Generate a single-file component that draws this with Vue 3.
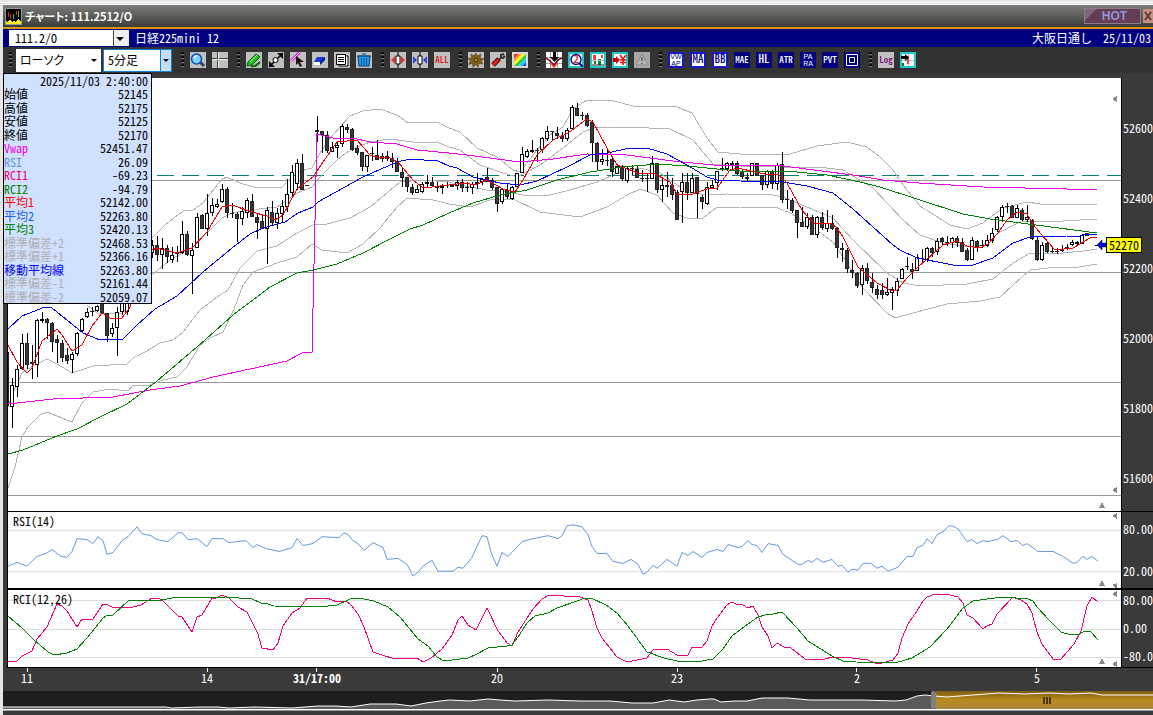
<template>
  <div class="window">
    <header class="title-bar">
      <svg class="app-icon" viewBox="0 0 17 17" shape-rendering="crispEdges">
        <rect width="17" height="17" fill="#999" />
        <rect x="1" y="1" width="15" height="15" fill="#000" />
        <path d="M3.5 4v5M5.5 6v5M11.5 3v4" stroke="#f02020" />
        <path d="M8.5 6v5M13.5 3v6" stroke="#20d040" />
        <path d="M1 16v-3l2 1 2-3 2 3 2-1 2 1 2-3 3 2v3z" fill="#ffee20" />
      </svg>
      <h1>チャート: 111.2512/O</h1>
      <button class="hot" type="button">HOT</button>
      <button class="close" type="button" aria-label="閉じる">
        <svg viewBox="0 0 10 14"><path d="M2 3l6 8M8 3l-6 8" stroke="#5c3c34" stroke-width="2" /></svg>
      </button>
    </header>

    <div class="symbol-bar">
      <div class="combo code">
        <select aria-label="銘柄コード"><option>111.2/O</option></select>
      </div>
      <span class="symbol-name">日経225mini 12</span>
      <span class="session">大阪日通し</span>
      <span>25/11/03</span>
    </div>

    <nav class="toolbar">
      <i class="grip"></i>
      <div class="combo kind">
        <select aria-label="チャート種類"><option>ローソク</option></select>
      </div>
      <div class="combo span">
        <select aria-label="足種"><option>5分足</option></select>
      </div>
      <template v-for="(group, g) in toolGroups" :key="g">
        <i class="grip"></i>
        <button v-for="tool in group" :key="tool.name" class="tool" type="button" :aria-label="tool.name">
          <svg viewBox="0 0 16 16">
            <rect width="16" height="16" :fill="tool.bg || '#c0c0c0'" />
            <rect v-if="tool.frame" x="1" y="1" width="14" height="14" fill="#fff" :stroke="tool.frame" stroke-width="2" />
            <path
              v-for="(s, i) in tool.shapes || []"
              :key="i"
              :d="s.d"
              :fill="s.fill || 'none'"
              :stroke="s.stroke || 'none'"
              :stroke-width="s.w || 1"
            />
            <text
              v-for="(t, i) in tool.text || []"
              :key="t"
              x="8"
              :y="tool.text.length > 1 ? 7 + i * 7 : 11"
              text-anchor="middle"
              :fill="tool.color"
              :class="tool.size || 'small'"
            >{{ t }}</text>
          </svg>
        </button>
      </template>
    </nav>

    <main class="chart">
      <section class="panel price">
        <svg class="plot" viewBox="8 78 1113 433" preserveAspectRatio="none" shape-rendering="crispEdges">
          <path d="M8 180.500H1121M8 272.500H1121M8 382.500H1121M8 436.500H1121M8 495.500H1121" stroke="#999" />
          <path d="M7 175.500H1121" stroke="#008078" stroke-dasharray="17 8" />
          <polyline v-for="(p, i) in bands" :key="i" :points="p" class="line" stroke="#b4b4b4" />
          <g v-for="c in candles" :key="c[0]">
            <rect :x="c[0]" :y="c[1]" width="1" :height="Math.max(c[4] - c[1], 1)" fill="#000" />
            <rect
              :x="c[0] - 1.5"
              :y="c[2] + 0.5"
              width="3"
              :height="Math.max(c[3] - c[2] - 1, 0.1)"
              :fill="c[5] ? '#383838' : '#fff'"
              :stroke="c[5] ? '#222' : '#000'"
            />
          </g>
          <polyline :points="vwap" class="line" stroke="#f000e8" />
          <polyline :points="maLong" class="line" stroke="#008000" />
          <polyline :points="maMid" class="line" stroke="#0000f0" />
          <polyline :points="maShort" class="line" stroke="#f00000" />
          <path d="M1095 245.500H1099" stroke="#000" />
          <path d="M1117 96v6l-5-3zM1117 487v6l-5-3zM1099 508l3-6 3 6z" fill="#888" />
        </svg>
        <div class="axis">
          <span v-for="v in prices" :key="v">{{ v }}</span>
        </div>
        <div class="last-price">
          <svg viewBox="0 0 9 10"><path d="M0 5l5-5v3h4v4H5v3z" fill="#0000e0" stroke="#000" stroke-width="0.500" /></svg>
          <b>52270</b>
        </div>
      </section>

      <section class="panel rsi">
        <svg class="plot" viewBox="8 512 1113 77" preserveAspectRatio="none" shape-rendering="crispEdges">
          <path d="M8 530.500H1121M8 572.500H1121" stroke="#dcdcdc" />
          <polyline :points="rsi" class="line" stroke="#6495e0" />
          <path d="M1117 513v6l-5-3zM1117 584v5h-1l-4-3zM1099 587l3-6 3 6z" fill="#888" />
        </svg>
        <h2>RSI(14)</h2>
        <div class="axis">
          <span>80.00</span>
          <span>20.00</span>
        </div>
      </section>

      <section class="panel rci">
        <svg class="plot" viewBox="8 591 1113 77" preserveAspectRatio="none" shape-rendering="crispEdges">
          <path d="M8 601.500H1121M8 630.500H1121M8 658.500H1121" stroke="#dcdcdc" />
          <polyline :points="rciFast" class="line" stroke="#f0007c" />
          <polyline :points="rciSlow" class="line" stroke="#008000" />
          <path d="M1117 592v6l-5-3zM1117 662v6l-5-3zM1099 665l3-6 3 6z" fill="#888" />
        </svg>
        <h2>RCI(12,26)</h2>
        <div class="axis">
          <span>80.00</span>
          <span>0.00</span>
          <span>-80.0</span>
        </div>
      </section>

      <svg class="time-axis">
        <g v-for="t in times" :key="t.label">
          <line :x1="t.x" :x2="t.x" y1="0" y2="4" stroke="#fff" shape-rendering="crispEdges" />
          <text :x="t.x" y="15" text-anchor="middle" fill="#fff" :class="{ strong: t.strong }">{{ t.label }}</text>
        </g>
      </svg>
    </main>

    <div class="navigator">
      <svg viewBox="3 691 1150 18" preserveAspectRatio="none">
        <defs>
          <linearGradient id="gold" x1="0" y1="0" x2="0" y2="1">
            <stop offset="0" stop-color="#7c5a10" />
            <stop offset="0.500" stop-color="#ba8c1e" />
            <stop offset="1" stop-color="#a8853a" />
          </linearGradient>
        </defs>
        <rect x="3" y="691" width="1150" height="18" fill="#1e1e1e" />
        <polygon :points="`3,709 ${overview} 1153,709`" fill="#5a5a5a" />
        <rect x="936" y="691" width="217" height="18" fill="url(#gold)" />
        <polyline :points="overview" fill="none" stroke="#fff" />
        <rect x="931" y="691" width="5" height="18" rx="2" fill="#808080" />
        <path d="M1044 697v7M1047 697v7M1050 697v7" stroke="#503808" stroke-width="2" />
      </svg>
    </div>
    <footer class="status"></footer>

    <table class="data-box">
      <thead>
        <tr><td colspan="2">2025/11/03 2:40:00</td></tr>
      </thead>
      <tbody>
        <tr v-for="row in readings" :key="row.label">
          <th scope="row" :class="row.tone">{{ row.label }}</th>
          <td>{{ row.value }}</td>
        </tr>
      </tbody>
    </table>
  </div>
</template>

<script setup>
const prices = [52600, 52400, 52200, 52000, 51800, 51600];

// tick positions as a share of the window width, right of the 3px edge
const times = [
  { label: '11', at: 24 },
  { label: '14', at: 204 },
  { label: '31/17:00', at: 314, strong: true },
  { label: '20', at: 494 },
  { label: '23', at: 674 },
  { label: '2', at: 854 },
  { label: '5', at: 1034 }
].map(t => ({ ...t, x: `${(t.at / 1150 * 100).toFixed(2)}%` }));

const readings = [
  { label: '始値', value: '52145' },
  { label: '高値', value: '52175' },
  { label: '安値', value: '52125' },
  { label: '終値', value: '52170' },
  { label: 'Vwap', value: '52451.47', tone: 'magenta' },
  { label: 'RSI', value: '26.09', tone: 'sky' },
  { label: 'RCI1', value: '-69.23', tone: 'pink' },
  { label: 'RCI2', value: '-94.79', tone: 'green' },
  { label: '平均1', value: '52142.00', tone: 'red' },
  { label: '平均2', value: '52263.80', tone: 'azure' },
  { label: '平均3', value: '52420.13', tone: 'green' },
  { label: '標準偏差+2', value: '52468.53', tone: 'gray' },
  { label: '標準偏差+1', value: '52366.16', tone: 'gray' },
  { label: '移動平均線', value: '52263.80', tone: 'blue' },
  { label: '標準偏差-1', value: '52161.44', tone: 'gray' },
  { label: '標準偏差-2', value: '52059.07', tone: 'gray' }
];

const navy = '#000080';
const toolGroups = [
  [
    { name: '拡大', shapes: [
      { d: 'M10 10l4 4', stroke: '#3a3a60', w: 3 },
      { d: 'M11.500 7a5 5 0 1 1-10 0a5 5 0 1 1 10 0z', fill: '#7cd0ff', stroke: '#1050c0', w: 1.5 },
      { d: 'M4 6a3 3 0 0 1 3-2', stroke: '#fff', w: 1.5 }
    ] },
    { name: '十字線', shapes: [
      { d: 'M5.500 0v16M0 6.500h16', stroke: '#305030' },
      { d: 'M6.500 0v16M0 7.500h16', stroke: '#e8f0e8' }
    ] }
  ],
  [
    { name: 'ペン', shapes: [
      { d: 'M2 10l8-8 4 3-8 8-5 1z', fill: '#20c020', stroke: '#106010' },
      { d: 'M4 10l7-7', stroke: '#a0ff90' },
      { d: 'M5 14c4 1 6-1 9-4', stroke: '#106010', w: 2 }
    ] },
    { name: '線分', shapes: [
      { d: 'M3 13L13 3', stroke: '#000', w: 1.5 },
      { d: 'M9 1h6v6zM1 9v6h6z', fill: '#000' },
      { d: 'M10 8a2.500 2.500 0 1 1-5 0a2.500 2.500 0 1 1 5 0z', fill: '#fff', stroke: '#000' }
    ] },
    { name: '選択', shapes: [
      { d: 'M1 9L10 0', stroke: '#f020e0', w: 3 },
      { d: 'M1 9L10 0', stroke: '#fff' },
      { d: 'M6 4v9l2-2 2 4 2-1-2-4h4z', fill: '#201010' }
    ] },
    { name: '消しゴム', shapes: [
      { d: 'M2 10l3-5h8l-2 5z', fill: '#1838d8' },
      { d: 'M2 10h6v3H2z', fill: '#fff' },
      { d: 'M8 10l5-5v3l-5 5z', fill: '#001890' }
    ] },
    { name: 'コピー', shapes: [
      { d: 'M5 4h9v10H5z', fill: '#fff', stroke: '#000' },
      { d: 'M2.500 2.500h9v10h-9z', fill: '#fff', stroke: '#000' },
      { d: 'M4 5.500h6M4 7.500h6M4 9.500h6', stroke: '#000' }
    ] },
    { name: '削除', shapes: [
      { d: 'M2 4h12l-1 10H3z', fill: '#20a0f0', stroke: '#083868' },
      { d: 'M1 4h14M6 2h4M5.500 6v7M10.500 6v7M8 6v7', stroke: '#084888' }
    ] }
  ],
  [
    { name: '間隔を広げる', shapes: [
      { d: 'M1 8l4-4v8zM15 8l-4-4v8z', fill: '#f03030' },
      { d: 'M8 0v16', stroke: '#000' },
      { d: 'M6 4h4v8H6z', fill: '#fff', stroke: '#000' }
    ] },
    { name: '間隔を狭める', shapes: [
      { d: 'M5 8L1 4v8zM11 8l4-4v8z', fill: '#3040f0' },
      { d: 'M8 0v16', stroke: '#000' },
      { d: 'M6 4h4v8H6z', fill: '#fff', stroke: '#000' }
    ] },
    { name: '全体', text: ['ALL'], color: '#e01010' }
  ],
  [
    { name: '設定', shapes: [
      { d: 'M8 1l1.500 3 3.500-2-1 4 4 1-3 2 2 3-4-.5-1 4-2-3-3 3-.5-4-4 1 2-4-3-2 4-.5-.5-4 3 2z', fill: '#806018', stroke: '#403010', w: 0.5 },
      { d: 'M10 8a2 2 0 1 1-4 0a2 2 0 1 1 4 0z', fill: '#b08828', stroke: '#403010' }
    ] },
    { name: '工具', shapes: [
      { d: 'M3 13l6-6', stroke: '#500808', w: 5 },
      { d: 'M3 13l6-6', stroke: '#e02020', w: 3 },
      { d: 'M8 8l3-2M14 2l-3 1 0 2 2 1 2-2', stroke: '#303030', w: 2 }
    ] },
    { name: '配色', bg: '#fff', shapes: [
      { d: 'M0 0h9L0 9z', fill: '#f03030' },
      { d: 'M9 0h3L0 12V9z', fill: '#ff9820' },
      { d: 'M12 0h4L0 16v-4z', fill: '#fff020' },
      { d: 'M16 0v4L4 16H0z', fill: '#20d040' },
      { d: 'M16 4v4l-8 8H4z', fill: '#20d0f0' },
      { d: 'M16 8v4l-4 4H8z', fill: '#3048f0' },
      { d: 'M16 12v4h-4z', fill: '#c020e0' },
      { d: 'M1 1h14v14H1z', stroke: '#d8d8d8', w: 2 }
    ] }
  ],
  [
    { name: '売買サイン', bg: '#fff', shapes: [
      { d: 'M0 5.500h16M0 11.500h16M4.500 0v16M11.500 0v16', stroke: '#a0a0a0' },
      { d: 'M0 6l4 3 4 4 4-5 4-2', stroke: '#700010', w: 1.5 },
      { d: 'M7 0h3v5h3L8.500 10 4 5h3z', fill: '#000' },
      { d: 'M5 11l3 4 3-4', stroke: '#f02020', w: 1.5 }
    ] },
    { name: '銘柄検索', frame: '#20c8c8', text: ['2'], color: '#e01010', size: 'medium', shapes: [
      { d: 'M11 11l4 4', stroke: '#000080', w: 2 },
      { d: 'M13 7.500a5 5 0 1 1-10 0a5 5 0 1 1 10 0z', fill: '#fff', stroke: '#101090', w: 1.5 }
    ] },
    { name: '比較', frame: '#20c8c8', shapes: [
      { d: 'M3 3h3v5H3zM11 3h2v3h-2z', fill: '#f04040' },
      { d: 'M4 9h2v3H4zM8 7h3v6H8z', fill: '#108030' },
      { d: 'M2 8.500h12', stroke: '#b0d0d0' },
      { d: 'M2 13h12', stroke: '#202020' }
    ] },
    { name: '注文', frame: '#20c8c8', shapes: [
      { d: 'M1 6h3V4l4 4-4 4v-2H1z', fill: '#d00000' },
      { d: 'M8 3l3 4 3-4M11 7v6M8 8h6M8 10.500h6', stroke: '#e01010', w: 1.5 }
    ] },
    { name: 'アラート', bg: '#a8a8a8', shapes: [
      { d: 'M8 2l6 11H2z', fill: '#b8b8b8', stroke: '#888' },
      { d: 'M8 5v4M8 10.500v1.500', stroke: '#606060', w: 1.5 }
    ] }
  ],
  [
    { name: 'VWAP', frame: '#1818c8', text: ['VW', 'AP'], color: navy, size: 'tiny' },
    { name: '移動平均', frame: '#1818c8', text: ['MA'], color: navy, size: 'medium' },
    { name: 'ボリンジャーバンド', frame: '#1818c8', text: ['BB'], color: navy, size: 'medium' },
    { name: 'エンベロープ', bg: navy, text: ['MAE'], color: '#fff' },
    { name: 'ハイロー', bg: navy, text: ['HL'], color: '#fff', size: 'medium' },
    { name: 'ATR', bg: navy, text: ['ATR'], color: '#fff' },
    { name: 'パラボリック', bg: navy, text: ['PA', 'RA'], color: '#fff', size: 'tiny' },
    { name: 'ピボット', bg: navy, text: ['PVT'], color: '#fff' },
    { name: '四本値', bg: navy, shapes: [{ d: 'M2.500 2.500h11v11h-11zM5.500 5.500h5v5h-5z', stroke: '#fff' }] }
  ],
  [
    { name: '対数', text: ['Log'], color: '#800080' },
    { name: '画面切替', frame: '#20c8c8', shapes: [
      { d: 'M2 8.500h12M8.500 2v12', stroke: '#c0c0c0' },
      { d: 'M7 4h2v8H7z', fill: '#f04040' },
      { d: 'M1 4h4V2l4 3.500L5 9V7H1z', fill: '#000' },
      { d: 'M2 11h2v3H2z', fill: '#108030' }
    ] }
  ]
];

// x, high, body top, body bottom, low, falling
const candles = [
  [7, 352, 352, 406, 406, 1], [12, 378, 385, 407, 428, 0], [17, 365, 369, 387, 397, 0], [22, 334, 343, 369, 370, 0],
  [27, 333, 343, 365, 369, 1], [32, 345, 362, 364, 379, 1], [37, 319, 320, 365, 377, 0], [42, 312, 319, 321, 323, 0],
  [47, 318, 319, 323, 339, 1], [52, 322, 323, 342, 352, 1], [57, 335, 339, 343, 363, 1], [62, 340, 343, 358, 362, 1],
  [67, 348, 355, 361, 364, 1], [72, 352, 354, 360, 373, 0], [77, 332, 333, 354, 356, 0], [82, 318, 319, 331, 333, 0],
  [87, 308, 312, 317, 318, 0], [92, 307, 311, 312, 316, 1], [97, 305, 306, 311, 312, 0], [102, 303, 303, 313, 313, 1],
  [107, 313, 313, 336, 342, 1], [112, 323, 328, 334, 337, 0], [117, 307, 312, 328, 356, 0], [122, 303, 303, 312, 315, 0],
  [127, 303, 303, 312, 315, 0], [152, 240, 245, 253, 258, 0], [157, 236, 245, 255, 261, 1], [162, 238, 248, 255, 269, 0],
  [167, 245, 248, 257, 263, 1], [172, 247, 255, 260, 263, 0], [177, 246, 253, 254, 262, 1], [182, 221, 234, 253, 254, 0],
  [187, 231, 234, 255, 256, 1], [192, 243, 250, 256, 294, 0], [197, 213, 217, 248, 248, 0], [202, 214, 215, 229, 229, 1],
  [207, 194, 213, 229, 236, 0], [212, 198, 205, 213, 216, 0], [217, 199, 204, 207, 208, 0], [222, 184, 189, 202, 203, 0],
  [227, 187, 189, 213, 218, 1], [232, 203, 213, 214, 218, 1], [237, 212, 214, 219, 242, 1], [242, 207, 211, 219, 225, 0],
  [247, 198, 200, 213, 218, 0], [252, 194, 201, 217, 217, 1], [257, 213, 217, 223, 239, 1], [262, 215, 221, 229, 229, 1],
  [267, 207, 210, 229, 264, 0], [272, 201, 212, 223, 226, 1], [277, 208, 213, 223, 229, 0], [282, 200, 206, 214, 223, 0],
  [287, 179, 194, 207, 212, 0], [292, 165, 172, 193, 197, 0], [297, 159, 163, 184, 190, 0], [302, 154, 163, 190, 190, 1],
  [307, 185, 185, 186, 186, 1], [317, 116, 130, 132, 142, 1], [322, 131, 131, 135, 153, 1], [327, 131, 135, 151, 153, 1],
  [332, 142, 147, 152, 152, 0], [337, 142, 145, 148, 158, 0], [342, 124, 126, 144, 147, 0], [347, 124, 127, 130, 133, 1],
  [352, 128, 129, 150, 151, 1], [357, 145, 148, 153, 155, 1], [362, 152, 152, 167, 171, 1], [367, 155, 155, 167, 172, 0],
  [372, 147, 153, 154, 161, 1], [377, 140, 155, 160, 160, 1], [382, 153, 156, 159, 162, 1], [387, 151, 156, 159, 161, 1],
  [392, 153, 158, 162, 168, 1], [397, 158, 161, 172, 172, 1], [402, 168, 172, 178, 187, 1], [407, 177, 177, 187, 192, 1],
  [412, 184, 187, 193, 195, 1], [417, 185, 189, 193, 193, 0], [422, 182, 184, 192, 193, 0], [427, 175, 182, 184, 187, 0],
  [432, 177, 182, 186, 187, 1], [437, 182, 187, 188, 192, 1], [442, 184, 186, 188, 194, 0], [447, 182, 185, 186, 188, 1],
  [452, 184, 185, 187, 187, 1], [457, 180, 182, 186, 190, 0], [462, 179, 182, 188, 192, 1], [467, 182, 187, 188, 192, 1],
  [472, 182, 184, 188, 194, 0], [477, 173, 182, 184, 189, 0], [482, 178, 179, 182, 185, 0], [487, 168, 177, 182, 182, 1],
  [492, 178, 180, 188, 190, 1], [497, 187, 187, 204, 212, 1], [502, 188, 189, 202, 204, 0], [507, 183, 190, 197, 199, 1],
  [512, 186, 187, 199, 200, 0], [517, 173, 173, 187, 187, 0], [522, 147, 154, 173, 173, 0], [527, 149, 151, 157, 158, 0],
  [532, 140, 150, 152, 153, 0], [537, 148, 150, 151, 162, 1], [542, 137, 138, 150, 153, 0], [547, 126, 131, 139, 141, 0],
  [552, 131, 131, 132, 140, 1], [557, 127, 133, 136, 139, 1], [562, 132, 136, 139, 142, 1], [567, 128, 130, 139, 141, 0],
  [572, 105, 107, 129, 130, 0], [577, 103, 108, 116, 116, 1], [582, 112, 115, 116, 120, 1], [587, 113, 115, 126, 127, 1],
  [592, 120, 122, 143, 162, 1], [597, 142, 143, 162, 170, 1], [602, 149, 159, 162, 165, 0], [607, 150, 160, 161, 166, 1],
  [612, 157, 159, 172, 177, 1], [617, 164, 166, 174, 174, 0], [622, 165, 168, 179, 181, 1], [627, 167, 168, 181, 183, 0],
  [632, 165, 168, 169, 175, 1], [637, 165, 169, 178, 178, 1], [642, 170, 178, 179, 182, 1], [647, 173, 178, 179, 192, 1],
  [652, 156, 163, 179, 179, 0], [657, 163, 163, 190, 193, 1], [662, 177, 185, 190, 202, 0], [667, 172, 185, 187, 197, 1],
  [672, 178, 185, 195, 200, 1], [677, 190, 192, 220, 220, 1], [682, 173, 182, 192, 223, 0], [687, 173, 182, 193, 200, 1],
  [692, 173, 178, 193, 193, 0], [697, 177, 177, 194, 218, 1], [702, 195, 197, 202, 209, 1], [707, 182, 187, 204, 205, 0],
  [712, 180, 185, 188, 189, 0], [717, 171, 171, 183, 190, 0], [722, 158, 168, 169, 171, 1], [727, 162, 163, 169, 171, 0],
  [732, 161, 163, 165, 171, 1], [737, 161, 163, 174, 175, 1], [742, 170, 171, 177, 179, 1], [747, 173, 177, 179, 182, 1],
  [752, 163, 163, 176, 176, 0], [757, 163, 163, 176, 176, 1], [762, 175, 175, 185, 190, 1], [767, 170, 171, 185, 188, 0],
  [772, 170, 171, 184, 189, 1], [777, 163, 165, 184, 190, 0], [782, 152, 164, 200, 203, 1], [787, 190, 199, 200, 209, 1],
  [792, 198, 200, 211, 213, 1], [797, 210, 210, 223, 238, 1], [802, 207, 222, 227, 227, 1], [807, 213, 217, 227, 229, 0],
  [812, 215, 217, 235, 235, 1], [817, 216, 217, 235, 238, 0], [822, 212, 217, 228, 230, 1], [827, 210, 223, 229, 232, 0],
  [832, 215, 223, 229, 230, 1], [837, 227, 228, 248, 258, 1], [842, 243, 248, 250, 262, 1], [847, 248, 250, 269, 273, 1],
  [852, 260, 270, 273, 278, 1], [857, 272, 273, 286, 288, 1], [862, 265, 268, 285, 295, 0], [867, 263, 268, 281, 284, 1],
  [872, 273, 282, 288, 293, 1], [877, 285, 289, 295, 299, 1], [882, 283, 290, 295, 299, 1], [887, 278, 292, 295, 296, 0],
  [892, 287, 289, 293, 310, 0], [897, 278, 281, 291, 296, 0], [902, 268, 269, 279, 279, 0], [907, 257, 266, 267, 270, 1],
  [912, 263, 269, 272, 279, 1], [917, 254, 257, 271, 271, 0], [922, 249, 258, 259, 262, 1], [927, 247, 248, 260, 262, 0],
  [932, 247, 248, 253, 257, 1], [937, 238, 241, 252, 255, 0], [942, 237, 238, 242, 245, 1], [947, 236, 242, 243, 246, 1],
  [952, 237, 238, 243, 248, 0], [957, 236, 238, 243, 247, 1], [962, 238, 242, 252, 252, 1], [967, 248, 250, 260, 261, 1],
  [972, 237, 240, 260, 260, 0], [977, 240, 241, 247, 252, 1], [982, 240, 245, 246, 248, 1], [987, 235, 240, 246, 247, 0],
  [992, 228, 233, 241, 243, 0], [997, 216, 217, 230, 232, 0], [1002, 205, 207, 217, 222, 0], [1007, 203, 206, 207, 213, 1],
  [1012, 205, 206, 218, 218, 1], [1017, 205, 208, 218, 218, 0], [1022, 208, 210, 220, 221, 1], [1027, 205, 217, 220, 222, 0],
  [1032, 219, 220, 239, 240, 1], [1037, 237, 240, 260, 261, 1], [1042, 242, 245, 260, 261, 0], [1047, 242, 243, 252, 253, 1],
  [1052, 247, 251, 252, 253, 1], [1057, 248, 251, 252, 254, 1], [1062, 245, 249, 251, 252, 1], [1067, 244, 247, 248, 250, 1],
  [1072, 240, 242, 245, 246, 0], [1077, 241, 242, 244, 245, 0], [1082, 234, 235, 244, 244, 0], [1087, 233, 233, 236, 236, 1]
];

const maShort = '8,345 17,362 27,373 32,368 42,341 57,329 62,335 72,351 82,345 92,326 102,313 112,319 122,318 130,307 152,250 157,248 177,253 192,248 207,232 222,207 232,205 252,212 267,216 275,220 283,215 297,189 313,177 323,162 337,142 357,140 370,155 380,158 388,157 398,162 413,180 422,187 432,187 449,185 465,183 475,185 487,180 503,189 515,192 523,180 537,155 553,140 568,133 587,119 593,122 607,148 617,165 640,174 653,173 670,182 677,194 693,194 707,189 717,188 730,170 738,168 755,172 770,175 778,174 787,183 802,210 813,223 832,224 837,228 843,237 858,267 877,283 892,291 897,290 907,278 918,267 943,245 957,241 967,246 980,248 988,244 998,233 1007,220 1017,212 1027,214 1035,227 1055,250 1073,248 1090,238 1097,237';
const maMid = '8,329 22,316 45,307 52,308 83,333 100,340 123,339 137,325 155,309 177,296 203,272 232,248 250,234 263,228 285,222 298,213 313,207 318,202 363,177 397,162 410,159 438,161 449,166 457,168 473,177 500,183 520,185 537,181 567,167 590,155 607,153 630,148 647,148 667,154 687,165 707,177 717,180 740,181 783,182 807,186 833,193 853,209 893,245 900,250 917,258 953,265 973,265 993,258 1013,243 1030,237 1067,236 1080,236 1087,234 1097,234';
const maLong = '8,454 23,450 57,436 77,429 100,417 127,404 157,381 197,347 233,315 270,287 297,273 313,270 337,264 363,253 390,239 410,229 423,225 449,213 473,203 500,195 527,190 557,180 590,172 623,167 657,164 687,166 717,169 740,171 787,171 827,175 860,182 880,187 917,199 963,214 990,219 1013,222 1097,233';
const vwap = '8,404 53,399 113,397 150,390 180,386 213,377 287,361 302,353 312,352 317,134 337,139 353,138 370,142 397,144 417,150 449,153 467,155 520,162 553,159 587,154 627,155 673,161 713,165 783,166 853,175 883,180 919,183 983,187 1067,189 1097,189';

const bands = [
  '152,238 165,225 183,211 193,210 203,203 222,179 227,177 240,183 257,188 282,187 297,172 312,168 317,158 327,142 340,127 350,116 363,111 380,109 397,115 408,123 437,122 449,128 460,132 477,148 497,157 513,170 520,172 537,150 550,135 563,127 573,109 587,100 610,100 637,107 660,106 677,107 692,113 707,138 718,152 740,154 757,155 790,154 817,146 847,142 867,147 880,157 893,170 903,185 920,206 950,225 967,229 983,223 1003,208 1027,202 1040,204 1097,204',
  '87,305 97,313 122,314 130,305 152,275 170,260 193,247 222,218 232,213 250,210 277,207 297,193 312,187 320,177 337,160 350,150 370,142 390,139 413,142 437,142 449,147 460,150 480,165 500,172 517,177 540,165 563,148 583,132 597,127 627,127 670,129 693,140 713,164 740,166 783,167 827,168 843,170 873,188 903,220 920,235 943,243 970,247 983,245 1000,232 1020,222 1040,221 1063,221 1097,219',
  '8,407 13,393 22,373 33,366 47,359 57,364 72,373 93,366 127,364 133,358 147,351 160,343 173,340 183,332 200,310 217,297 228,290 240,268 257,251 277,246 297,233 313,225 327,224 350,218 370,207 400,182 423,180 449,182 460,185 487,190 507,192 523,195 550,195 570,190 597,182 620,172 640,168 660,173 680,187 703,195 727,194 773,195 783,197 800,204 833,218 853,240 887,273 903,283 920,286 967,284 993,279 1013,263 1030,253 1063,253 1083,251 1097,249',
  '8,488 15,467 22,437 28,427 40,415 47,412 72,422 82,403 93,392 110,389 128,391 133,385 150,385 163,380 177,377 187,367 200,345 210,338 223,332 234,309 243,285 253,272 277,263 297,257 312,244 322,250 347,253 363,244 380,228 397,207 407,198 433,200 449,204 470,207 490,200 513,199 540,212 580,217 607,207 627,195 640,189 657,195 673,213 690,219 703,218 717,207 740,207 778,208 790,213 807,223 833,242 847,263 863,288 887,313 895,318 913,313 947,304 980,301 1000,297 1013,285 1030,270 1057,267 1073,268 1097,264'
];

const rsi = '8,567 17,563 27,567 37,557 46,554 52,550 61,557 67,558 72,552 77,539 87,540 93,544 98,537 103,541 107,555 113,553 122,541 128,537 137,527 142,534 151,536 157,540 168,542 178,533 182,533 188,540 197,539 207,547 212,539 223,539 229,543 246,541 253,548 257,545 266,549 279,552 292,548 297,539 303,546 313,544 322,537 339,538 344,533 348,535 353,541 358,544 364,551 373,543 383,548 387,560 398,559 407,565 413,577 418,573 424,566 432,561 438,572 453,572 458,568 463,569 472,558 482,536 487,537 491,553 497,567 502,553 508,557 512,553 522,542 533,539 548,536 558,539 562,536 567,526 573,525 582,527 588,535 592,547 597,554 607,554 613,562 623,564 631,560 638,565 643,575 647,573 653,566 657,569 667,560 677,567 682,553 688,556 693,552 702,558 707,553 717,550 723,552 728,545 738,548 742,547 748,541 752,545 757,546 762,553 768,544 778,546 783,555 798,565 802,565 808,561 812,563 817,559 823,563 832,560 838,567 842,566 848,573 852,570 858,571 863,564 871,564 877,569 882,567 888,572 898,568 907,557 913,557 917,548 923,546 927,539 932,544 937,535 943,532 949,526 952,526 958,529 967,542 972,540 977,544 983,541 987,542 997,540 1003,536 1011,542 1017,541 1023,546 1027,544 1038,552 1053,552 1063,557 1073,564 1077,563 1083,557 1087,560 1092,557 1098,562';
const rciFast = '8,662 17,662 22,657 32,652 37,640 47,628 57,605 62,607 67,612 77,628 82,620 93,620 103,605 108,606 112,608 133,608 141,606 152,599 159,599 163,602 178,617 182,618 192,633 197,618 202,616 212,599 216,599 222,596 229,599 238,608 247,613 258,635 262,649 273,651 278,644 283,627 292,614 300,609 307,599 327,599 337,603 346,602 351,606 358,615 364,628 373,653 385,657 392,659 417,659 423,663 431,659 442,650 452,636 458,621 462,617 468,626 476,631 487,609 498,632 507,644 512,647 518,633 533,610 542,600 549,596 558,596 564,597 573,597 580,598 588,601 592,612 597,629 602,639 617,658 627,663 632,662 647,659 653,651 667,650 677,656 688,656 692,648 702,648 707,642 712,627 717,619 727,606 732,603 736,605 743,606 748,609 753,607 758,616 762,628 768,637 772,649 777,644 784,648 791,649 805,660 825,660 832,658 843,658 860,660 868,661 875,664 882,664 893,661 898,654 902,639 908,625 917,612 923,602 927,598 935,595 950,596 958,598 963,604 967,616 973,619 983,630 987,627 992,625 997,615 1013,598 1021,601 1027,605 1032,614 1037,633 1042,645 1053,660 1061,660 1074,645 1081,632 1087,607 1092,598 1098,603';
const rciSlow = '8,617 22,629 33,640 48,653 54,656 67,654 77,650 87,639 103,619 108,616 113,616 128,602 155,601 161,601 178,598 192,599 226,598 252,600 261,604 268,605 274,607 320,608 337,606 350,600 359,599 374,602 388,608 400,618 418,640 428,647 437,658 444,662 468,659 477,655 488,649 507,647 512,646 518,638 527,624 535,617 548,614 557,609 580,601 584,599 591,599 606,606 617,614 628,627 647,653 664,659 677,662 702,662 713,660 723,650 732,637 741,630 758,618 765,616 773,615 782,613 797,629 808,642 832,657 843,662 856,663 895,664 912,659 930,648 947,630 963,609 973,602 1002,598 1028,600 1033,602 1037,608 1050,622 1061,633 1071,636 1079,635 1085,632 1091,633 1098,641';
const overview = '3,707 166,707 171,708 200,707 218,707 229,708 255,707 292,708 318,706 336,706 351,707 370,704 396,704 411,706 426,703 440,701 450,700 470,701 488,699 500,700 515,701 548,700 580,701 610,701 632,703 653,703 669,700 684,702 697,700 710,699 714,699 721,702 735,701 747,701 762,698 788,698 810,700 862,700 895,701 906,700 917,696 925,695 934,696 947,697 973,695 999,693 1025,694 1050,693 1069,694 1091,693 1102,695 1153,695';
</script>

<style>
body {
  margin: 0;
  background: #e6e6e6;
}
</style>

<style scoped>
.window {
  position: relative;
  box-sizing: border-box;
  min-height: 100vh;
  display: flex;
  flex-direction: column;
  padding-top: 5px;
  padding-left: 3px;
  overflow: hidden;
  background: linear-gradient(#e6e6e6 2px, #fff 2px, #fff 3px, #e0e0e0 3px, #e0e0e0 4px, #fff 4px, #fff 5px, #e6e6e6 5px);
  color: #fff;
  font-family: "Noto Sans CJK JP", sans-serif;
  font-size: 12px;
  font-feature-settings: "hwid";
  line-height: 16px;
}

button,
select {
  margin: 0;
  border: none;
  border-radius: 0;
  padding: 0;
  font: inherit;
  font-feature-settings: inherit;
}

svg {
  display: block;
}

.title-bar {
  display: flex;
  align-items: center;
  height: 22px;
  padding-left: 2px;
  border-bottom: 2px solid #d8940c;
  background: linear-gradient(#7c7c7a, #3c3c38);
}

.app-icon {
  width: 17px;
  height: 17px;
}

.title-bar h1 {
  flex: 1;
  margin: 0 0 0 3px;
  font-size: 11px;
  font-weight: 700;
  font-feature-settings: "palt";
}

.hot {
  box-sizing: border-box;
  width: 57px;
  height: 16px;
  margin-right: 2px;
  border: 1px solid #8a7c84;
  padding-left: 4px;
  background: linear-gradient(135deg, #84667c 16%, #643c54 17%);
  color: #9494d4;
  font-family: "Liberation Sans", sans-serif;
  font-weight: 700;
  line-height: 14px;
}

.close {
  width: 10px;
  height: 14px;
  background: #c89080;
}

.symbol-bar {
  display: flex;
  align-items: center;
  height: 18px;
  padding: 0 2px 0 6px;
  background: #000080;
}

.symbol-name {
  flex: 1;
  margin-left: 6px;
}

.session {
  margin-right: 11px;
}

.combo {
  position: relative;
  display: flex;
  background: #fff;
}

.combo select {
  appearance: none;
  width: 100%;
  padding-left: 4px;
  background: none;
  color: #000;
}

.combo::after {
  content: '';
  position: absolute;
  top: 50%;
  right: 4px;
  margin-top: -1px;
  border: 3px solid transparent;
  border-top-color: #000;
  border-bottom: none;
}

.code {
  width: 120px;
  background: linear-gradient(90deg, #fff 104px, #444 104px, #444 105px, #f0f0f0 105px);
}

.code select {
  height: 16px;
  padding-left: 6px;
}

.code::after {
  right: 5px;
  border-width: 4px 4px 0;
}

.toolbar {
  box-sizing: border-box;
  display: flex;
  align-items: center;
  gap: 6px;
  height: 26px;
  padding-left: 3px;
  background: #333;
}

.toolbar .combo {
  box-sizing: border-box;
  height: 23px;
}

.kind {
  width: 85px;
  margin-left: -2px;
}

.kind select {
  font-feature-settings: "palt";
}

.span {
  width: 69px;
  margin-left: -4px;
  border: 1px solid #1080d8;
  background: linear-gradient(90deg, #fff 56px, #1080d8 56px, #1080d8 57px, #c4e0f8 57px);
}

.span::after {
  right: 2px;
}

.grip {
  flex: none;
  width: 3px;
  height: 16px;
  margin-left: 3px;
  background: repeating-linear-gradient(#0c0c0c 0, #0c0c0c 2px, #777 2px, #777 3px, #333 3px, #333 4px);
}

.tool {
  flex: none;
  width: 16px;
  height: 16px;
  background: none;
}

.tool svg {
  width: 16px;
  height: 16px;
}

.tool text {
  font-family: "Noto Sans CJK JP", sans-serif;
  font-weight: 500;
}

.tool .tiny {
  font-family: "Liberation Sans", sans-serif;
  font-size: 7px;
}

.small {
  font-size: 9px;
}

.medium {
  font-size: 11px;
}

.chart {
  padding: 5px 0 0 4px;
  background: #3a3a3a;
}

.panel {
  position: relative;
  display: grid;
  grid-template-columns: 1fr 32px;
  border-bottom: 1px solid #000;
  border-left: 1px solid #000;
}

.plot {
  width: 100%;
  height: 77px;
  background: #fff;
}

.price .plot {
  height: 433px;
}

.rsi {
  border-bottom-width: 2px;
}

.rsi .plot {
  height: 76px;
}

.line {
  fill: none;
  stroke-width: 1;
}

.panel h2 {
  position: absolute;
  top: 1px;
  left: 5px;
  margin: 0;
  color: #000;
  font-size: 12px;
  font-weight: 400;
}

.axis {
  display: flex;
  flex-direction: column;
  overflow: hidden;
  border-left: 1px solid #000;
  padding-left: 1px;
  white-space: nowrap;
}

.price .axis {
  box-sizing: border-box;
  height: 433px;
  padding-top: 15px;
  line-height: 70px;
}

.rsi .axis {
  padding-top: 9px;
  gap: 26px;
}

.rci .axis {
  padding-top: 2px;
  gap: 12px;
}

.last-price {
  position: absolute;
  top: 159px;
  right: 11px;
  display: flex;
  align-items: center;
}

.last-price svg {
  width: 9px;
  height: 10px;
}

.last-price b {
  border: 1px solid #000;
  padding: 0 2px;
  background: #ff0;
  color: #000;
  font-weight: 400;
  line-height: 14px;
}

.time-axis {
  width: calc(100% + 4px);
  height: 23px;
  margin-left: -4px;
}

.strong {
  font-weight: 700;
}

.navigator svg {
  width: 100%;
  height: 18px;
}

.status {
  flex: 1;
  min-height: 4px;
  border-top: 1px solid #fff;
  background: linear-gradient(#999 1px, #3a3a3a 1px);
}

.data-box {
  position: absolute;
  top: 73px;
  left: 3px;
  width: 149px;
  height: 231px;
  border: 1px solid #000;
  border-spacing: 0;
  background: #d0e0ff;
  color: #000;
  line-height: 13px;
}

.data-box th,
.data-box td {
  padding: 0;
}

.data-box th {
  font-weight: 400;
  text-align: left;
}

.data-box td {
  padding-right: 3px;
  text-align: right;
}

.data-box .magenta { color: #f000e8; }
.data-box .sky { color: #6495e0; }
.data-box .pink { color: #f0007c; }
.data-box .green { color: #008000; }
.data-box .red { color: #ff0000; }
.data-box .azure { color: #2060f0; }
.data-box .gray { color: #b0b0b0; }
.data-box .blue { color: #0000ff; }
</style>
